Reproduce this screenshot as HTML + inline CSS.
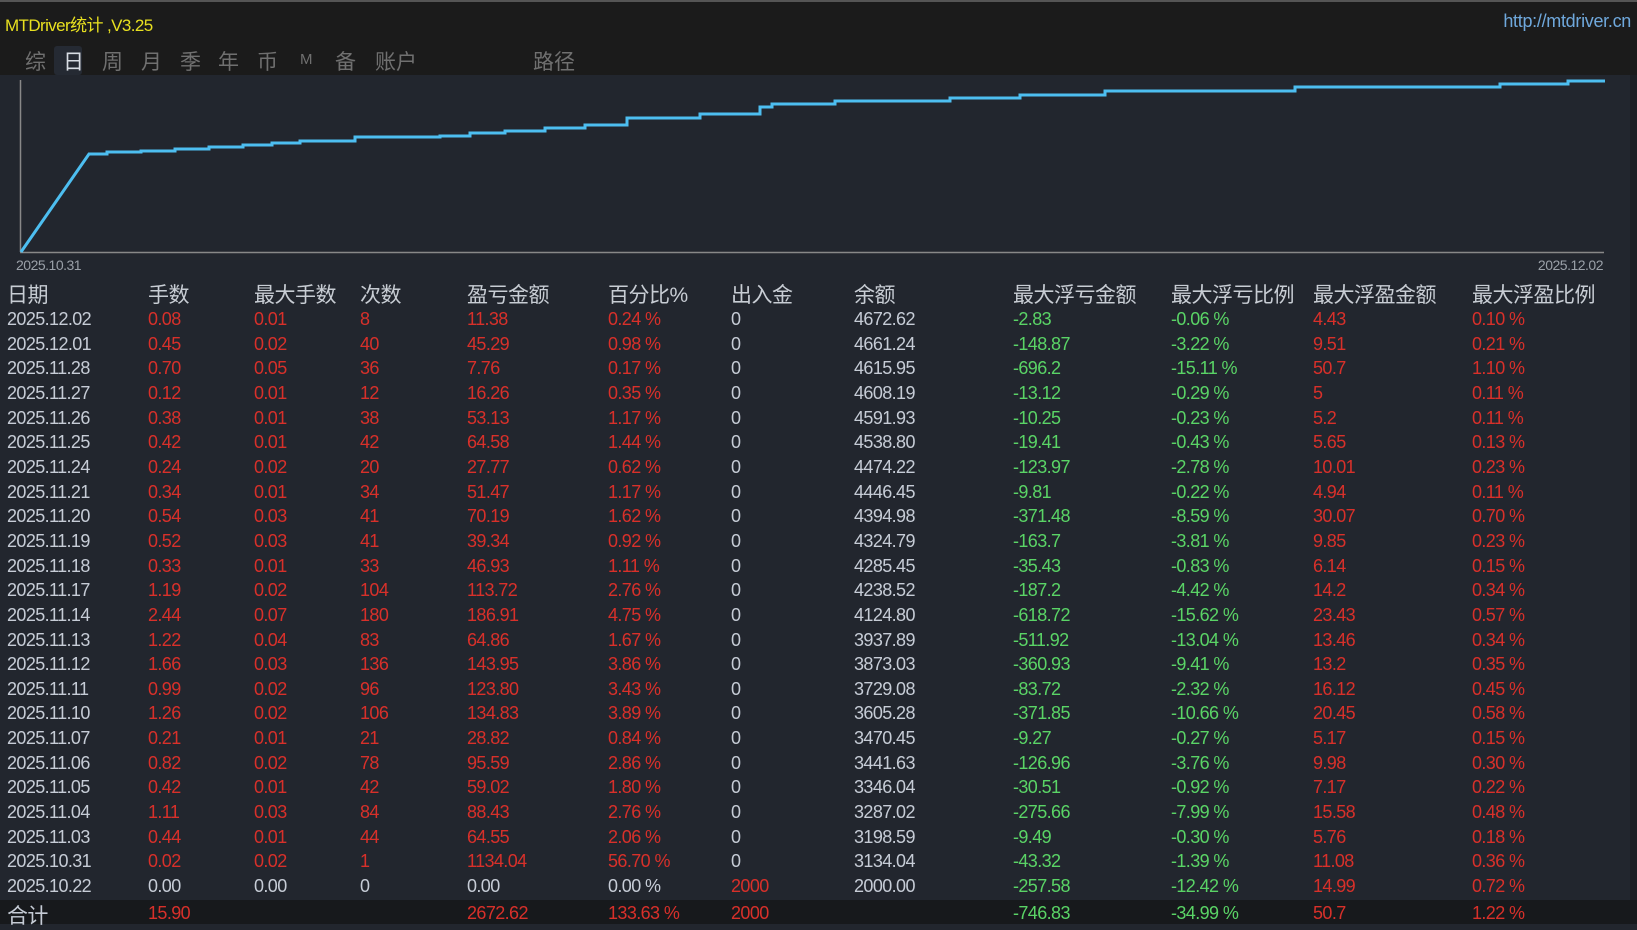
<!DOCTYPE html>
<html><head><meta charset="utf-8"><style>
*{margin:0;padding:0;box-sizing:border-box}
body{width:1637px;height:924px;background:#22262e;overflow:hidden;position:relative;font-family:"Liberation Sans","Noto Sans CJK SC",sans-serif;}
#top{position:absolute;left:0;top:0;width:1637px;height:75px;background:#1b1b1b;border-top:2px solid #555}
#title{position:absolute;left:5px;top:9px;font-size:17px;color:#e8e020;letter-spacing:-0.6px}
#url{position:absolute;right:6px;top:9px;font-size:18px;color:#6fa8dc;letter-spacing:-0.3px}
.tab{position:absolute;top:44px;font-size:21px;color:#707070}
#sel{position:absolute;left:54px;top:44px;width:28px;height:29px;background:#252a33;border-radius:3px}
.t{position:absolute;font-size:18px;letter-spacing:-0.6px;white-space:nowrap}
.h{font-size:21px;color:#c8cdd4;letter-spacing:-0.5px}
.w{color:#c6ccd6}.r{color:#d8302a}.g{color:#5ad466}
#tot{position:absolute;left:0;top:900px;width:1637px;height:24px;background:#17191c}
#rs{position:absolute;right:0;top:75px;width:7px;height:849px;background:#1c1f24}
</style></head><body>
<div id="top">
<div id="title">MTDriver统计 ,V3.25</div>
<div id="url">http://mtdriver.cn</div>
<div id="sel"></div>
<span class="tab" style="left:25px">综</span>
<span class="tab" style="left:63px;color:#d8dde4">日</span>
<span class="tab" style="left:102px">周</span>
<span class="tab" style="left:141px">月</span>
<span class="tab" style="left:180px">季</span>
<span class="tab" style="left:218px">年</span>
<span class="tab" style="left:257px">币</span>
<span class="tab" style="left:300px;font-size:15px;top:49px">M</span>
<span class="tab" style="left:335px">备</span>
<span class="tab" style="left:375px">账户</span>
<span class="tab" style="left:533px">路径</span>
</div>
<div id="rs"></div>
<svg style="position:absolute;left:0;top:0" width="1637" height="280">
<line x1="20.5" y1="80" x2="20.5" y2="252" stroke="#888" stroke-width="1.5"/>
<line x1="20" y1="252.5" x2="1604" y2="252.5" stroke="#888" stroke-width="1.5"/>
<polyline fill="none" stroke="#4dbef0" stroke-width="3" points="21,252 89,154 107,154 107,152 141,152 141,151 175,151 175,149 209,149 209,147 243,147 243,145 272,145 272,143 300,143 300,141 355,141 355,137 440,137 440,136 470,136 470,133 505,133 505,131 545,131 545,128 585,128 585,125 627,125 627,118 700,118 700,114 760,114 760,107 772,107 772,104 835,104 835,101 950,101 950,98 1020,98 1020,95 1105,95 1105,91 1295,91 1295,87 1500,87 1500,84 1568,84 1568,81 1605,81"/>
<text x="16" y="270" font-size="14" fill="#9aa0a8" font-family="Liberation Sans" letter-spacing="-0.5">2025.10.31</text>
<text x="1603" y="270" font-size="14" fill="#9aa0a8" font-family="Liberation Sans" text-anchor="end" letter-spacing="-0.5">2025.12.02</text>
</svg>
<div id="tot"></div>
<div id="rows"></div>
<script>
var cols=[7,148,254,360,467,608,731,854,1013,1171,1313,1472];
var hd=["日期","手数","最大手数","次数","盈亏金额","百分比%","出入金","余额","最大浮亏金额","最大浮亏比例","最大浮盈金额","最大浮盈比例"];
var d=`2025.12.02|0.08|0.01|8|11.38|0.24 %|0|4672.62|-2.83|-0.06 %|4.43|0.10 %
2025.12.01|0.45|0.02|40|45.29|0.98 %|0|4661.24|-148.87|-3.22 %|9.51|0.21 %
2025.11.28|0.70|0.05|36|7.76|0.17 %|0|4615.95|-696.2|-15.11 %|50.7|1.10 %
2025.11.27|0.12|0.01|12|16.26|0.35 %|0|4608.19|-13.12|-0.29 %|5|0.11 %
2025.11.26|0.38|0.01|38|53.13|1.17 %|0|4591.93|-10.25|-0.23 %|5.2|0.11 %
2025.11.25|0.42|0.01|42|64.58|1.44 %|0|4538.80|-19.41|-0.43 %|5.65|0.13 %
2025.11.24|0.24|0.02|20|27.77|0.62 %|0|4474.22|-123.97|-2.78 %|10.01|0.23 %
2025.11.21|0.34|0.01|34|51.47|1.17 %|0|4446.45|-9.81|-0.22 %|4.94|0.11 %
2025.11.20|0.54|0.03|41|70.19|1.62 %|0|4394.98|-371.48|-8.59 %|30.07|0.70 %
2025.11.19|0.52|0.03|41|39.34|0.92 %|0|4324.79|-163.7|-3.81 %|9.85|0.23 %
2025.11.18|0.33|0.01|33|46.93|1.11 %|0|4285.45|-35.43|-0.83 %|6.14|0.15 %
2025.11.17|1.19|0.02|104|113.72|2.76 %|0|4238.52|-187.2|-4.42 %|14.2|0.34 %
2025.11.14|2.44|0.07|180|186.91|4.75 %|0|4124.80|-618.72|-15.62 %|23.43|0.57 %
2025.11.13|1.22|0.04|83|64.86|1.67 %|0|3937.89|-511.92|-13.04 %|13.46|0.34 %
2025.11.12|1.66|0.03|136|143.95|3.86 %|0|3873.03|-360.93|-9.41 %|13.2|0.35 %
2025.11.11|0.99|0.02|96|123.80|3.43 %|0|3729.08|-83.72|-2.32 %|16.12|0.45 %
2025.11.10|1.26|0.02|106|134.83|3.89 %|0|3605.28|-371.85|-10.66 %|20.45|0.58 %
2025.11.07|0.21|0.01|21|28.82|0.84 %|0|3470.45|-9.27|-0.27 %|5.17|0.15 %
2025.11.06|0.82|0.02|78|95.59|2.86 %|0|3441.63|-126.96|-3.76 %|9.98|0.30 %
2025.11.05|0.42|0.01|42|59.02|1.80 %|0|3346.04|-30.51|-0.92 %|7.17|0.22 %
2025.11.04|1.11|0.03|84|88.43|2.76 %|0|3287.02|-275.66|-7.99 %|15.58|0.48 %
2025.11.03|0.44|0.01|44|64.55|2.06 %|0|3198.59|-9.49|-0.30 %|5.76|0.18 %
2025.10.31|0.02|0.02|1|1134.04|56.70 %|0|3134.04|-43.32|-1.39 %|11.08|0.36 %
2025.10.22|0.00|0.00|0|0.00|0.00 %|2000|2000.00|-257.58|-12.42 %|14.99|0.72 %`.split("\n");
var h="";
hd.forEach(function(s,i){h+='<div class="t h" style="left:'+cols[i]+'px;top:279px">'+s+'</div>';});
function cls(i,v,last){if(i==0||i==6&&v=="0"||i==7)return"w";if(i>=8&&i<=9)return"g";if(last&&i<6)return"w";return"r";}
d.forEach(function(line,k){var a=line.split("|");var y=309+k*24.65;var last=(k==d.length-1);
a.forEach(function(v,i){h+='<div class="t '+cls(i,v,last)+'" style="left:'+cols[i]+'px;top:'+y.toFixed(1)+'px">'+v+'</div>';});});
var tt=["合计","15.90","","","2672.62","133.63 %","2000","","-746.83","-34.99 %","50.7","1.22 %"];
tt.forEach(function(v,i){if(!v)return;var c=i==0?"w":(i==8||i==9?"g":"r");h+='<div class="t '+c+'" style="left:'+cols[i]+'px;top:'+(i==0?900:903)+'px;'+(i==0?'font-size:21px':'')+'">'+v+'</div>';});
document.getElementById("rows").innerHTML=h;
</script>
</body></html>
